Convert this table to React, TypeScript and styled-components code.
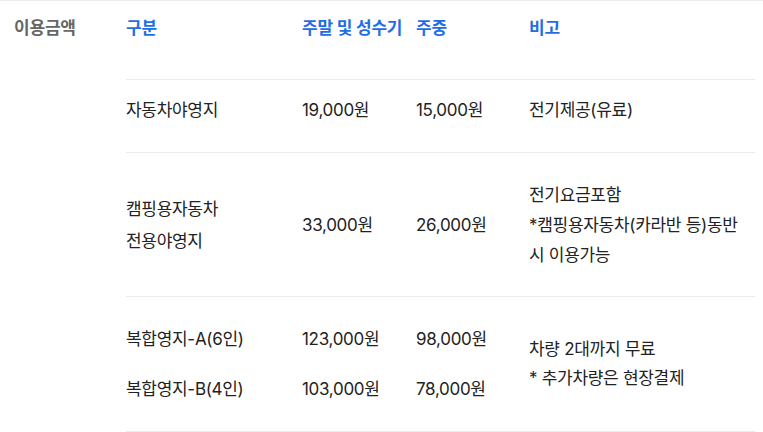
import React from "react";
import styled, { createGlobalStyle } from "styled-components";

const GlobalStyle = createGlobalStyle`
  body {
    margin: 0;
    background: #fff;
    font-family: Inter, "Noto Sans CJK KR", sans-serif;
    color: #222;
  }
`;

const COLS = "176px 114px 113px 1fr";

const Section = styled.section`
  display: flex;
  border-top: 1px solid #ebebeb;
  width: 763px;
`;

const Label = styled.div`
  width: 126px;
  box-sizing: border-box;
  padding: 16px 0 0 14px;
  font-size: 17px;
  font-weight: 700;
  color: #666;
  line-height: 22px;
  letter-spacing: -0.2px;
`;

const Table = styled.div`
  flex: 1;
  margin-right: 8px;
`;

const Row = styled.div<{ h: number; head?: boolean; lift?: number }>`
  display: grid;
  grid-template-columns: ${COLS};
  height: ${({ h }) => h}px;
  align-items: ${({ head }) => (head ? "start" : "center")};
  padding-top: ${({ head }) => (head ? "16px" : "0")};
  padding-bottom: ${({ lift }) => lift ?? 0}px;
  box-sizing: border-box;
  border-bottom: 1px solid #ebebeb;
`;

const Head = styled.div`
  font-size: 17px;
  font-weight: 700;
  color: #1e6ee6;
  line-height: 22px;
  letter-spacing: -0.2px;
  white-space: nowrap;
`;

const Cell = styled.div<{ lh?: number }>`
  font-size: 17px;
  line-height: ${({ lh }) => lh ?? 30}px;
  letter-spacing: -0.3px;
  color: #222;
  white-space: nowrap;
`;

const SubGrid = styled.div`
  grid-column: span 3;
  display: grid;
  grid-template-columns: 176px 114px 113px;
  row-gap: 20px;
  align-items: center;
`;

export default function App() {
  return (
    <>
      <GlobalStyle />
      <Section>
        <Label>이용금액</Label>
        <Table>
          <Row h={79} head>
            <Head>구분</Head>
            <Head>주말 및 성수기</Head>
            <Head>주중</Head>
            <Head>비고</Head>
          </Row>
          <Row h={73} lift={12}>
            <Cell>자동차야영지</Cell>
            <Cell>19,000원</Cell>
            <Cell>15,000원</Cell>
            <Cell>전기제공(유료)</Cell>
          </Row>
          <Row h={144}>
            <Cell lh={32}>
              캠핑용자동차
              <br />
              전용야영지
            </Cell>
            <Cell>33,000원</Cell>
            <Cell>26,000원</Cell>
            <Cell lh={30}>
              전기요금포함
              <br />
              *캠핑용자동차(카라반 등)동반
              <br />시 이용가능
            </Cell>
          </Row>
          <Row h={135}>
            <SubGrid>
              <Cell>복합영지-A(6인)</Cell>
              <Cell>123,000원</Cell>
              <Cell>98,000원</Cell>
              <Cell>복합영지-B(4인)</Cell>
              <Cell>103,000원</Cell>
              <Cell>78,000원</Cell>
            </SubGrid>
            <Cell lh={29}>
              차량 2대까지 무료
              <br />* 추가차량은 현장결제
            </Cell>
          </Row>
        </Table>
      </Section>
    </>
  );
}
